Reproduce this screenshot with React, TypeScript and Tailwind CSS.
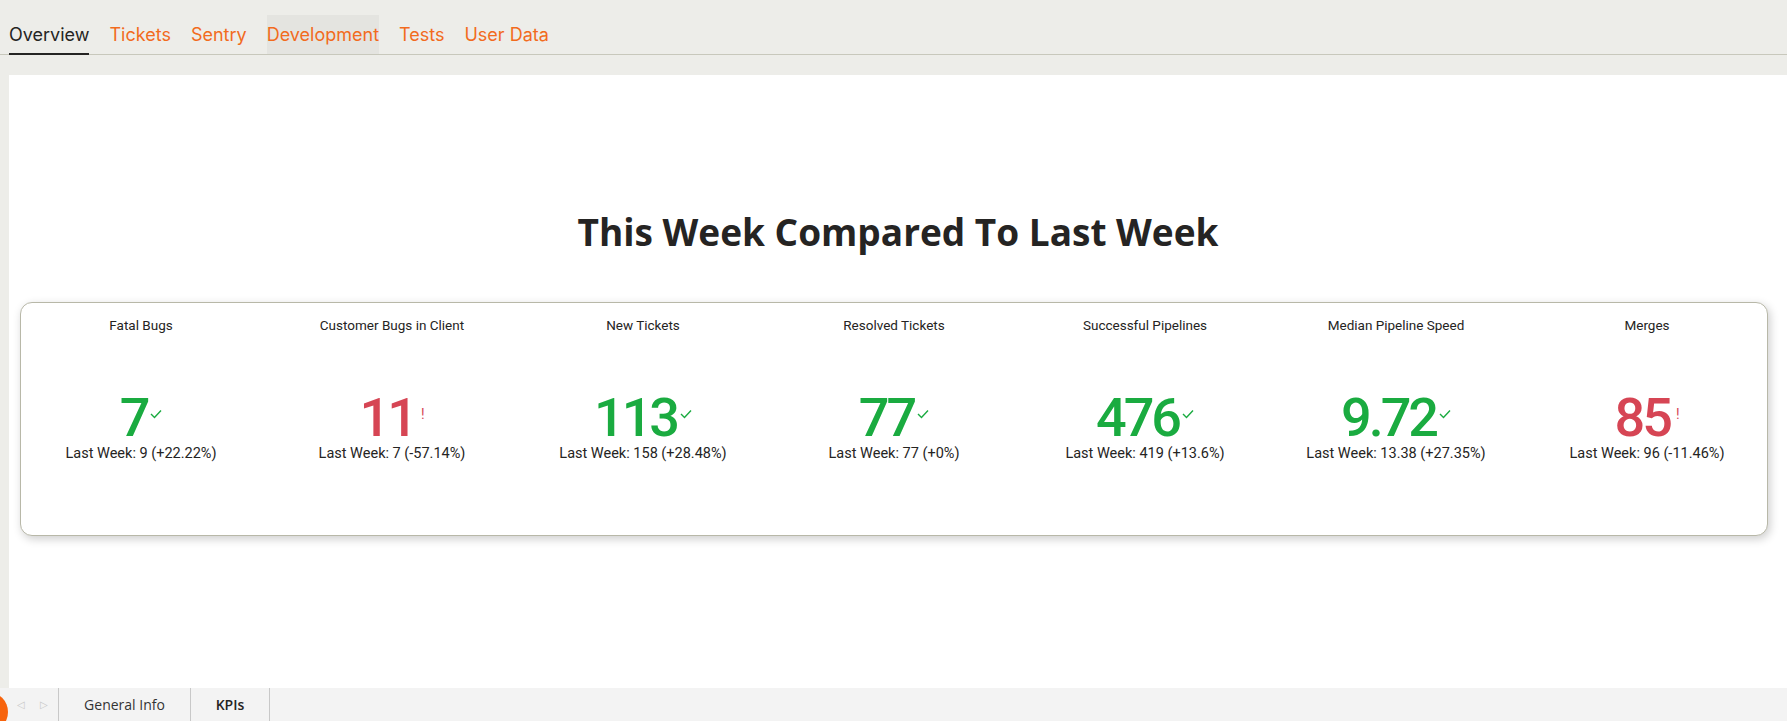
import React from 'react';

type Kpi = {
  title: string;
  value: string;
  lastWeek: string;
  good: boolean;
};

const kpis: Kpi[] = [
  { title: 'Fatal Bugs', value: '7', lastWeek: 'Last Week: 9 (+22.22%)', good: true },
  { title: 'Customer Bugs in Client', value: '11', lastWeek: 'Last Week: 7 (-57.14%)', good: false },
  { title: 'New Tickets', value: '113', lastWeek: 'Last Week: 158 (+28.48%)', good: true },
  { title: 'Resolved Tickets', value: '77', lastWeek: 'Last Week: 77 (+0%)', good: true },
  { title: 'Successful Pipelines', value: '476', lastWeek: 'Last Week: 419 (+13.6%)', good: true },
  { title: 'Median Pipeline Speed', value: '9.72', lastWeek: 'Last Week: 13.38 (+27.35%)', good: true },
  { title: 'Merges', value: '85', lastWeek: 'Last Week: 96 (-11.46%)', good: false },
];

const tabs = ['Overview', 'Tickets', 'Sentry', 'Development', 'Tests', 'User Data'];

const CheckMark = () => (
  <svg width="12" height="10" viewBox="0 0 12 10" className="mb-[22px] ml-[3px]">
    <polyline points="1,5 4.5,8.5 11,1.5" fill="none" stroke="#1aab40" strokeWidth="1.4" />
  </svg>
);

const KpiCell: React.FC<{ kpi: Kpi }> = ({ kpi }) => (
  <div className="flex flex-col items-center">
    <div className="h-[16px] text-[13.5px] leading-[16px] text-[#252423] font-['Roboto',sans-serif]">{kpi.title}</div>
    <div className="mt-[62px] flex items-end">
      <span
        className={`text-[54px] font-medium leading-[46px] tracking-[-3px] font-['Roboto',sans-serif] ${
          kpi.good ? 'text-[#1aab40]' : 'text-[#d64554]'
        }`}
      >
        {kpi.value}
      </span>
      {kpi.good ? (
        <CheckMark />
      ) : (
        <span className="mb-[20px] ml-[6px] text-[14px] leading-[14px] text-[#d64554] font-['Roboto',sans-serif]">!</span>
      )}
    </div>
    <div className="mt-[4px] text-[14.5px] leading-[18px] text-[#252423] font-['Roboto',sans-serif]">{kpi.lastWeek}</div>
  </div>
);

export default function App() {
  return (
    <div className="flex h-[721px] w-full flex-col overflow-hidden bg-[#edede9]">
      <div className="flex h-[55px] items-end gap-[20px] border-b border-[#c8c8bc] pl-[9px]">
        {tabs.map((t, i) => (
          <div
            key={t}
            className={`relative flex h-[39px] items-center text-[18px] font-['Inter',sans-serif] ${
              i === 0 ? 'text-[#252423]' : 'text-[#f26b1d]'
            } ${t === 'Development' ? 'bg-[#e4e4e0]' : ''}`}
          >
            {t}
            {i === 0 && <div className="absolute bottom-[-1px] left-0 right-0 h-[2px] bg-[#252423]" />}
          </div>
        ))}
      </div>

      <div className="ml-[9px] mt-[20px] flex flex-1 flex-col bg-white">
        <h1 className="mt-[135px] text-center text-[37px] font-bold leading-[44px] text-[#252423] font-['Open_Sans',sans-serif]">
          This Week Compared To Last Week
        </h1>
        <div className="ml-[11px] mr-[19px] mt-[48px] h-[234px] rounded-[12px] border border-[#b8b8a8] bg-white pt-[14px] shadow-[2px_3px_10px_rgba(0,0,0,0.2)]">
          <div className="flex justify-center">
            {kpis.map((k) => (
              <div key={k.title} className="w-[251px] shrink-0">
                <KpiCell kpi={k} />
              </div>
            ))}
          </div>
        </div>
      </div>

      <div className="flex h-[33px] items-stretch bg-[#f3f3f3]">
        <div className="relative flex w-[58px] items-center">
          <div className="absolute left-[-32px] top-[4px] h-[40px] w-[40px] rounded-full bg-[#f7630c]" />
          <span className="ml-[17px] text-[10px] text-[#c8c8c8]">◁</span>
          <span className="ml-[15px] text-[10px] text-[#c8c8c8]">▷</span>
        </div>
        <div className="flex w-[132px] items-center justify-center border-l border-[#c8c8c8] text-[14px] text-[#333] font-['Open_Sans',sans-serif]">
          General Info
        </div>
        <div className="flex w-[80px] items-center justify-center border-x border-[#c8c8c8] text-[14px] font-semibold text-[#252423] font-['Open_Sans',sans-serif]">
          KPIs
        </div>
      </div>
    </div>
  );
}
